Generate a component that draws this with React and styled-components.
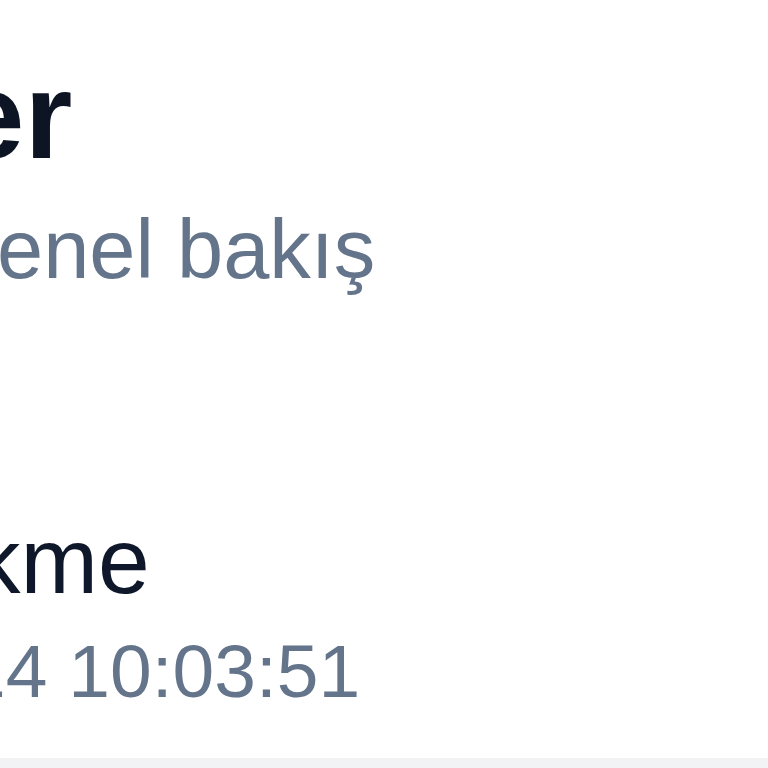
import React from 'react'
import styled, { createGlobalStyle } from 'styled-components'

const Global = createGlobalStyle`
  html, body { margin: 0; padding: 0; background: #ffffff; }
  body { font-family: "Liberation Sans", Arial, sans-serif; }
`

export default function App() {
  return <Page>
    <Global />
    <Header>
      <Title $shift={-44}>er</Title>
      <Subtitle $shift={-3}>enel bakış</Subtitle>
    </Header>
    <Item>
      <ItemName $shift={-26}>kme</ItemName>
      <ItemTime $shift={-36}>14 10:03:51</ItemTime>
    </Item>
    <Footer />
  </Page>
}

const Page = styled.div`
  width: 768px;
  height: 768px;
  overflow: hidden;
  display: flex;
  flex-direction: column;
  background: #ffffff;
`

const Header = styled.header`
  display: flex;
  flex-direction: column;
  gap: 23px;
  padding-top: 55px;
`

const Line = styled.div`
  margin-left: ${p => p.$shift}px;
  white-space: nowrap;
`

const Title = styled(Line)`
  font-size: 123px;
  line-height: 122px;
  font-weight: 700;
  color: #0d1424;
`

const Subtitle = styled(Line)`
  font-size: 83px;
  line-height: 100px;
  color: #64748b;
`

const Item = styled.section`
  display: flex;
  flex-direction: column;
  gap: 10px;
  margin-top: 211px;
  padding-bottom: 37px;
`

const ItemName = styled(Line)`
  font-size: 93px;
  line-height: 100px;
  color: #0f172a;
`

const ItemTime = styled(Line)`
  font-size: 75px;
  line-height: 100px;
  color: #64748b;
`

const Footer = styled.div`
  flex: 1;
  background: #f1f3f5;
`
